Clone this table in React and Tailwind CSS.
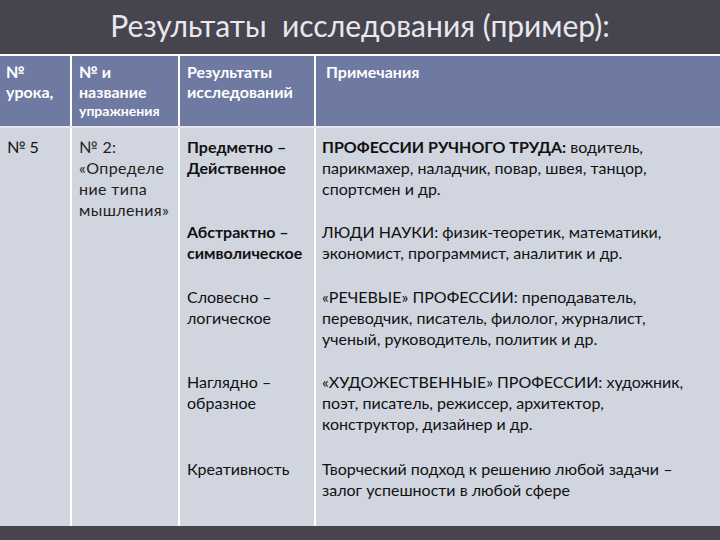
const rows = [
  {
    kind: <b className="font-bold">Предметно –<br />Действенное</b>,
    text: (
      <>
        <b className="font-bold">ПРОФЕССИИ РУЧНОГО ТРУДА:</b> водитель,
        <br />парикмахер, наладчик, повар, швея, танцор,
        <br />спортсмен и др.
      </>
    ),
    h: "h-[85px]",
  },
  {
    kind: <b className="font-bold">Абстрактно –<br />символическое</b>,
    text: (
      <>
        ЛЮДИ НАУКИ: физик-теоретик, математики,
        <br />экономист, программист, аналитик и др.
      </>
    ),
    h: "h-[65px]",
  },
  {
    kind: <>Словесно –<br />логическое</>,
    text: (
      <>
        «РЕЧЕВЫЕ» ПРОФЕССИИ: преподаватель,
        <br />переводчик, писатель, филолог, журналист,
        <br />ученый, руководитель, политик и др.
      </>
    ),
    h: "h-[85px]",
  },
  {
    kind: <>Наглядно –<br />образное</>,
    text: (
      <>
        «ХУДОЖЕСТВЕННЫЕ» ПРОФЕССИИ: художник,
        <br />поэт, писатель, режиссер, архитектор,
        <br />конструктор, дизайнер и др.
      </>
    ),
    h: "h-[87px]",
  },
  {
    kind: "Креативность",
    text: (
      <>
        Творческий подход к решению любой задачи –
        <br />залог успешности в любой сфере
      </>
    ),
    h: "flex-1",
  },
];

export default function App() {
  return (
    <div
      className="w-[720px] h-[540px] bg-[#45444f] flex flex-col overflow-hidden"
      style={{ fontFamily: "Lato, 'Noto Sans', 'Liberation Sans', sans-serif" }}
    >
      {/* Title */}
      <div className="h-[54px] flex items-center justify-center text-[#e8e8ec] text-[30px] leading-none pb-1">
        Результаты &nbsp;исследования (пример):
      </div>

      {/* Table */}
      <div className="border-t-2 border-white">
        {/* Header */}
        <div className="grid grid-cols-[70px_108px_136px_1fr] bg-[#6e7aa2] text-white font-bold text-[16px] leading-[19.5px] h-[72px] border-b-2 border-[#e6e8ee]">
          <div className="px-[6px] pt-[6px]">
            №<br />урока,
          </div>
          <div className="px-[7px] pt-[6px] border-l-2 border-white">
            № и<br />название
            <div className="text-[14px] leading-[20px]">упражнения</div>
          </div>
          <div className="px-[7px] pt-[6px] border-l-2 border-white">
            Результаты<br />исследований
          </div>
          <div className="px-[10px] pt-[6px] border-l-2 border-white">Примечания</div>
        </div>

        {/* Body */}
        <div className="grid grid-cols-[70px_108px_136px_1fr] bg-[#d0d5df] text-[#111] text-[16px] leading-[21px] h-[398px]">
          <div className="px-[7px] pt-[8px]">№ 5</div>
          <div className="px-[7px] pt-[8px] border-l-2 border-white text-[#222] tracking-[0.4px]">
            № 2:<br />«Определе<br />ние типа<br />мышления»
          </div>
          <div className="col-span-2 flex flex-col">
            {rows.map((r, i) => (
              <div key={i} className={`grid grid-cols-[136px_1fr] ${r.h}`}>
                <div className="px-[7px] pt-[8px] border-l-2 border-white">{r.kind}</div>
                <div className="pl-[6px] pt-[8px] border-l-2 border-white">{r.text}</div>
              </div>
            ))}
          </div>
        </div>
      </div>
    </div>
  );
}
